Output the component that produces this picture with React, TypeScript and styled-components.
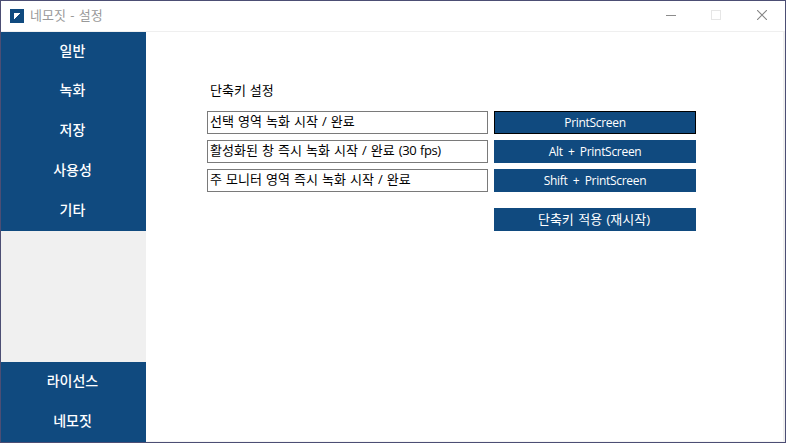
import React from "react";
import styled, { createGlobalStyle } from "styled-components";

const Global = createGlobalStyle`
  * { box-sizing: border-box; }
  body { margin: 0; background: #fff; }
`;

const navy = "#104a7f";

const Window = styled.div`
  display: flex;
  flex-direction: column;
  width: 786px;
  height: 443px;
  border: 1px solid #4c4e74;
  background: #fff;
  font-family: "Open Sans", "Noto Sans CJK KR", sans-serif;
  font-size: 13px;
  color: #000;
`;

const TitleBar = styled.header`
  display: flex;
  align-items: center;
  height: 31px;
  flex: none;
  padding-left: 9px;
  border-bottom: 1px solid #efefef;
`;

const Title = styled.span`
  flex: 1;
  margin-left: 6px;
  padding-bottom: 2px;
  line-height: 18px;
  word-spacing: 1px;
  color: #999;
`;

const WindowButton = styled.button<{ $width?: number }>`
  display: flex;
  align-items: center;
  justify-content: center;
  width: ${(p) => p.$width ?? 46}px;
  height: 30px;
  padding: 0 0 2px;
  border: 0;
  background: none;
`;

const Body = styled.div`
  display: flex;
  flex: 1;
  min-height: 0;
`;

const Sidebar = styled.nav`
  display: flex;
  flex-direction: column;
  justify-content: space-between;
  width: 145px;
  background: #f0f0f0;
`;

const NavGroup = styled.div`
  background: ${navy};
`;

const NavItem = styled.button<{ $first?: boolean }>`
  display: flex;
  align-items: center;
  justify-content: center;
  width: 100%;
  height: ${(p) => (p.$first ? 39 : 40)}px;
  padding: 0 2px ${(p) => (p.$first ? 3 : 5)}px 0;
  border: 0;
  background: none;
  color: #fff;
  font: 500 14px/20px "Noto Sans CJK KR", sans-serif;
`;

const Content = styled.main`
  flex: 1;
  padding: 48px 0 0 61px;
  border-right: 2px solid #f0f0f0;
  border-bottom: 1px solid #f5f5f5;
`;

const Heading = styled.div`
  height: 31px;
  padding-left: 3px;
  line-height: 20px;
  word-spacing: 0.5px;
`;

const Grid = styled.div`
  display: grid;
  grid-template-columns: 281px 202px;
  grid-auto-rows: 23px;
  gap: 6px;
`;

const Field = styled.div`
  display: flex;
  align-items: center;
  padding: 0 2px 3px;
  border: 1px solid #7a7a7a;
  line-height: 18px;
  white-space: pre;
  word-spacing: 0.7px;
`;

const Rate = styled.span`
  letter-spacing: -0.4px;
`;

const KeyButton = styled.button<{ $active?: boolean; $korean?: boolean }>`
  display: flex;
  align-items: center;
  justify-content: center;
  width: 202px;
  height: 23px;
  padding: 0 ${(p) => (p.$korean ? 2 : 0)}px ${(p) => (p.$korean ? 2 : 0)}px 0;
  border: 1px solid ${(p) => (p.$active ? "#000" : navy)};
  background: ${navy};
  color: #fff;
  font-family: inherit;
  font-size: ${(p) => (p.$korean ? 13 : 12)}px;
  line-height: 20px;
  letter-spacing: ${(p) => (p.$korean ? 0 : -0.3)}px;
  word-spacing: ${(p) => (p.$korean ? 1 : 2.5)}px;
  white-space: pre;
`;

const Apply = styled.div`
  display: flex;
  justify-content: flex-end;
  width: 489px;
  margin-top: 16px;
`;

const shortcuts = [
  { label: "선택 영역 녹화 시작 / 완료", keys: "PrintScreen", active: true },
  { label: "활성화된 창 즉시 녹화 시작 / 완료 ", rate: "(30 fps)", keys: "Alt + PrintScreen" },
  { label: "주 모니터 영역 즉시 녹화 시작 / 완료", keys: "Shift + PrintScreen" },
];

export default function App() {
  return (
    <>
      <Global />
      <Window>
        <TitleBar>
          <svg width="14" height="14" shapeRendering="crispEdges">
            <rect width="14" height="14" fill={navy} />
            <path d="M4 4H10L4 10Z" fill="#fff" />
          </svg>
          <Title>네모짓 - 설정</Title>
          <WindowButton aria-label="최소화" $width={44}>
            <svg width="10" height="10"><path d="M0 5.5H10" stroke="#8c8c8c" /></svg>
          </WindowButton>
          <WindowButton aria-label="최대화">
            <svg width="10" height="10"><rect x=".5" y=".5" width="9" height="9" fill="none" stroke="#e6e6e6" /></svg>
          </WindowButton>
          <WindowButton aria-label="닫기">
            <svg width="10" height="10"><path d="M0 0L10 10M10 0L0 10" stroke="#858585" strokeWidth="1.1" /></svg>
          </WindowButton>
        </TitleBar>
        <Body>
          <Sidebar>
            <NavGroup>
              <NavItem $first>일반</NavItem>
              {["녹화", "저장", "사용성", "기타"].map((t) => <NavItem key={t}>{t}</NavItem>)}
            </NavGroup>
            <NavGroup>
              <NavItem>라이선스</NavItem>
              <NavItem>네모짓</NavItem>
            </NavGroup>
          </Sidebar>
          <Content>
            <Heading>단축키 설정</Heading>
            <Grid>
              {shortcuts.map((s) => (
                <React.Fragment key={s.keys}>
                  <Field>
                    {s.label}
                    {s.rate && <Rate>{s.rate}</Rate>}
                  </Field>
                  <KeyButton $active={s.active}>{s.keys}</KeyButton>
                </React.Fragment>
              ))}
            </Grid>
            <Apply>
              <KeyButton $korean>단축키 적용 (재시작)</KeyButton>
            </Apply>
          </Content>
        </Body>
      </Window>
    </>
  );
}
